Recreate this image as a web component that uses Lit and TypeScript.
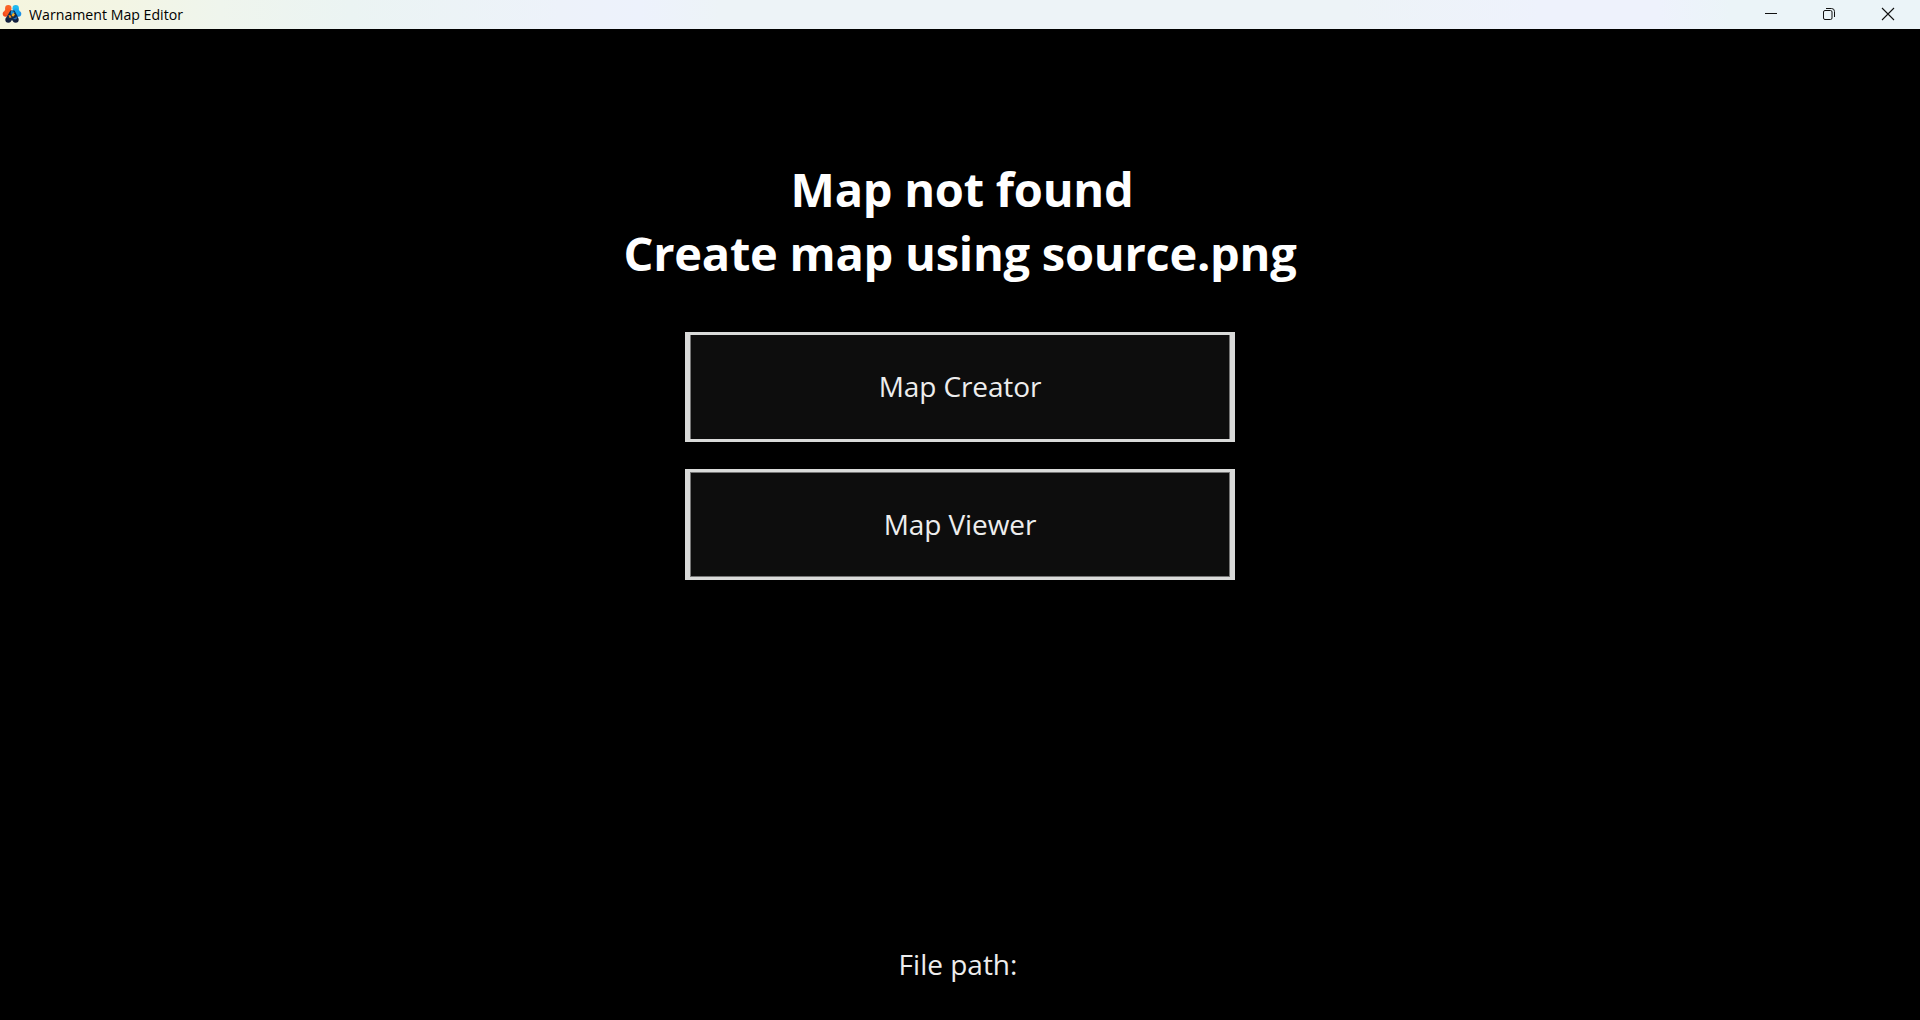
import { LitElement, html, css } from "lit";
import { customElement, property } from "lit/decorators.js";

@customElement("title-bar")
class TitleBar extends LitElement {
  static styles = css`
    :host {
      display: flex;
      height: 29px;
      flex: none;
      align-items: center;
      background: linear-gradient(90deg, #f5f5de 0, #f3f5e4 120px, #eff5ed 220px, #ebf4f3 350px, #edf2fa 560px, #edf2fc 640px, #edf3f7 720px, #edf3f7 1350px, #eef2fc 1540px, #eef2fc 1660px, #ebf4f8 1730px, #ebf4f8 100%);
    }
    .logo { width: 20px; height: 20px; margin: 0 0 1px 2px; flex: none; }
    .name { margin-left: 7px; flex: 1; display: block; }
    .name text { font: 14.6px "Open Sans", sans-serif; fill: #000; }
    .controls { display: flex; height: 29px; }
    .controls svg { width: 58px; height: 29px; display: block; }
  `;

  render() {
    return html`
      <svg class="logo" viewBox="0 0 20 20">
        <circle cx="6.300" cy="4.200" r="3.200" fill="#fa6428" />
        <circle cx="3.600" cy="9.800" r="2.900" fill="#f24a1d" />
        <circle cx="6" cy="8" r="3.600" fill="#fb5a20" />
        <circle cx="13.700" cy="4.200" r="3.200" fill="#1fb9f0" />
        <circle cx="16.400" cy="9.800" r="2.900" fill="#1a8fe8" />
        <circle cx="14" cy="8" r="3.600" fill="#18a5ee" />
        <circle cx="6.300" cy="15.800" r="3" fill="#13203f" />
        <circle cx="13.700" cy="15.800" r="3" fill="#13203f" />
        <path d="M4.500 13l4-6.500h4l3.500 6.500-3 3.500H7z" fill="#142a4c" />
        <path d="M9 6.500l3.500 1.500-1 3-2.800-.5z" fill="#178fd8" />
        <path d="M11 8.500l2 2-1.500 2-2-.5z" fill="#f7a81b" />
        <path d="M6.500 11l2 .5 1 2-2 .5z" fill="#f7941b" />
        <path d="M11 14h2l1.500-1.500.5 2-2 1z" fill="#1c6fc4" />
      </svg>
      <svg class="name" height="29">
        <text x="0" y="19.500" textLength="154" lengthAdjust="spacingAndGlyphs">Warnament Map Editor</text>
      </svg>
      <div class="controls">
        <svg viewBox="0 0 58 29"><path d="M19 13.500h12" stroke="#111" /></svg>
        <svg viewBox="0 0 58 29" fill="none" stroke="#111">
          <rect x="19.500" y="10.500" width="8.500" height="9" rx="1.500" />
          <path d="M22 8.500h5.500a3 3 0 0 1 3 3v5.500" />
        </svg>
        <svg viewBox="0 0 58 29"><path d="M20 8l12 12M32 8l-12 12" stroke="#111" stroke-width="1.100" /></svg>
      </div>
    `;
  }
}

@customElement("menu-button")
class MenuButton extends LitElement {
  @property() label = "";
  static styles = css`
    :host { display: block; }
    button {
      display: flex;
      box-sizing: border-box;
      width: 550px;
      height: 100%;
      margin: 0;
      padding: 3px 5px;
      border: 0;
      border-radius: 0;
      background: #d9dad9;
    }
    span {
      flex: 1;
      align-self: stretch;
      display: flex;
      align-items: center;
      justify-content: center;
      box-sizing: border-box;
      padding-bottom: 2px;
      border: solid #757575;
      border-width: 0 1px;
      background: #0d0d0d;
      color: #ededed;
      font: 28px/38px "Open Sans", sans-serif;
      letter-spacing: -0.1px;
    }
    :host([framed]) span { border-width: 1px; }
  `;
  render() {
    return html`<button><span>${this.label}</span></button>`;
  }
}

@customElement("app-root")
class AppRoot extends LitElement {
  static styles = css`
    :host {
      display: flex;
      flex-direction: column;
      height: 1020px;
      background: #000;
      overflow: hidden;
    }
    main {
      flex: 1;
      display: flex;
      flex-direction: column;
      align-items: center;
      padding-top: 128px;
      font-family: "Open Sans", sans-serif;
    }
    h1 {
      margin: 0 0 47px;
      font-size: 47px;
      line-height: 64px;
      font-weight: 700;
      letter-spacing: -0.25px;
      text-align: center;
      color: #fff;
    }
    .lead { display: block; padding-left: 4px; }
    .first { height: 110px; margin-bottom: 27px; }
    .second { height: 111px; }
    .path {
      margin: auto 0 37px;
      padding-right: 4px;
      font-size: 28px;
      line-height: 38px;
      color: #ededed;
    }
  `;
  render() {
    return html`
      <title-bar></title-bar>
      <main>
        <h1><span class="lead">Map not found</span>Create map using source.png</h1>
        <menu-button class="first" label="Map Creator"></menu-button>
        <menu-button class="second" label="Map Viewer" framed></menu-button>
        <p class="path">File path:</p>
      </main>
    `;
  }
}
